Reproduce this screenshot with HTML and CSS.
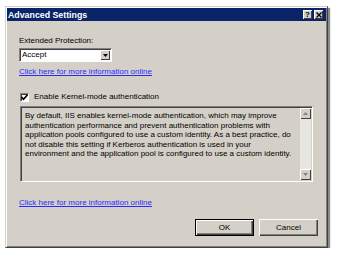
FILE: index.html
```html
<!DOCTYPE html>
<html lang="en">
<head>
    <meta charset="utf-8" />
    <title>Advanced Settings</title>
    <link rel="stylesheet" href="styles.css">
</head>
<body>
    <div class="window">
        <div class="titlebar">
            <span class="title">Advanced Settings</span>
            <span class="caption-buttons">
                <span class="caption-btn">?</span>
                <span class="caption-btn close">
                    <svg width="6" height="6" viewBox="0 0 6 6"><path d="M0.5 0.5 L5.5 5.5 M5.5 0.5 L0.5 5.5" stroke="#000" stroke-width="1.4" fill="none"/></svg>
                </span>
            </span>
        </div>
        <div class="content">
            <div class="label">Extended Protection:</div>
            <div class="select">
                <span class="select-value">Accept</span>
                <span class="select-arrow">
                    <svg width="5" height="3" viewBox="0 0 5 3"><path d="M0 0 H5 L2.5 3 Z" fill="#000"/></svg>
                </span>
            </div>
            <a class="link" href="#">Click here for more information online</a>

            <div class="check-row">
                <span class="checkbox">
                    <svg width="7" height="7" viewBox="0 0 7 7"><path d="M0.5 3 L2.5 5.2 L6.5 0.8" stroke="#000" stroke-width="1.6" fill="none"/></svg>
                </span>
                <span>Enable Kernel-mode authentication</span>
            </div>
            <div class="description">
                <div class="description-text">By default, IIS enables kernel-mode authentication, which may improve authentication performance and prevent authentication problems with application pools configured to use a custom identity. As a best practice, do not disable this setting if Kerberos authentication is used in your environment and the application pool is configured to use a custom identity.</div>
                <div class="scrollbar">
                    <span class="scroll-btn">
                        <svg width="5" height="3" viewBox="0 0 5 3"><path d="M0 3 H5 L2.5 0 Z" fill="#808080"/></svg>
                    </span>
                    <span class="scroll-track"></span>
                    <span class="scroll-btn">
                        <svg width="5" height="3" viewBox="0 0 5 3"><path d="M0 0 H5 L2.5 3 Z" fill="#808080"/></svg>
                    </span>
                </div>
            </div>

            <a class="link bottom-link" href="#">Click here for more information online</a>

            <div class="buttons">
                <span class="button default"><span class="button-face">OK</span></span>
                <span class="button"><span class="button-face">Cancel</span></span>
            </div>
        </div>
    </div>
</body>
</html>
```

FILE: styles.css
```css
body {
    margin: 0;
    padding: 6px 0 0 5px;
    background: #fff;
    font: 8px/10px "Liberation Sans", Arial, sans-serif;
    color: #000;
}

.window {
    width: 319px;
    height: 238px;
    background: #d4d0c8;
    border: 1px solid;
    border-color: #d4d0c8 #404040 #404040 #d4d0c8;
    padding: 1px;
    box-shadow: inset 1px 1px #fff, inset -1px -1px #808080, 2px 2px 1px #8a8a8a;
}

.titlebar {
    height: 13px;
    background: #0a246a;
    color: #fff;
    display: flex;
    align-items: center;
    justify-content: space-between;
    padding: 0 3px 0 1px;
}

    .title {
        font-weight: bold;
        font-size: 8.8px;
    }

.caption-buttons {
    display: flex;
    gap: 2px;
}

.caption-btn {
    width: 9px;
    height: 9px;
    background: #d4d0c8;
    color: #000;
    font-weight: bold;
    font-size: 8px;
    line-height: 9px;
    text-align: center;
    box-shadow: inset 1px 1px #fff, inset -1px -1px #404040;
    display: flex;
    align-items: center;
    justify-content: center;
}

.content {
    padding: 15px 0 0 12px;
}

.label {
    height: 11px;
}

.select {
    width: 89px;
    height: 12px;
    margin-top: 1px;
    background: #fff;
    border: 1px solid;
    border-color: #808080 #fff #fff #808080;
    box-shadow: inset 1px 1px #404040;
    display: flex;
    align-items: center;
    justify-content: space-between;
    padding-left: 2px;
}

.select-arrow {
    width: 10px;
    height: 10px;
    margin-right: 1px;
    background: #d4d0c8;
    box-shadow: inset 1px 1px #fff, inset -1px -1px #404040;
    display: flex;
    align-items: center;
    justify-content: center;
}

.link {
    display: block;
    color: #2a2aff;
    text-decoration: underline;
    margin-top: 5px;
    width: max-content;
}

.check-row {
    display: flex;
    align-items: center;
    gap: 5px;
    margin-top: 15px;
    padding-left: 1px;
}

.checkbox {
    width: 7px;
    height: 7px;
    background: #fff;
    border: 1px solid;
    border-color: #808080 #fff #fff #808080;
    box-shadow: inset 1px 1px #404040;
    display: flex;
    align-items: center;
    justify-content: center;
}

.description {
    width: 291px;
    height: 74px;
    margin: 4px 0 0 1px;
    border: 1px solid;
    border-color: #808080 #fff #fff #808080;
    box-shadow: inset 1px 1px #404040;
    display: flex;
}

.description-text {
    flex: 1;
    padding: 4px 3px 0 4px;
    line-height: 9.5px;
}

.scrollbar {
    width: 11px;
    display: flex;
    flex-direction: column;
    margin: 1px 1px 1px 0;
}

.scroll-btn {
    height: 11px;
    background: #d4d0c8;
    box-shadow: inset 1px 1px #fff, inset -1px -1px #404040;
    display: flex;
    align-items: center;
    justify-content: center;
}

.scroll-track {
    flex: 1;
    background: #e8e6e1;
}

.bottom-link {
    margin-top: 16px;
}

.buttons {
    display: flex;
    justify-content: flex-end;
    gap: 5px;
    margin-top: 11px;
    padding-right: 8px;
}

.button {
    width: 59px;
    height: 17px;
    box-sizing: border-box;
    background: #d4d0c8;
    box-shadow: inset 1px 1px #fff, inset -1px -1px #404040, inset -2px -2px #808080;
    display: flex;
}

    .button.default {
        border: 1px solid #000;
    }

.button-face {
    flex: 1;
    display: flex;
    align-items: center;
    justify-content: center;
}
```
